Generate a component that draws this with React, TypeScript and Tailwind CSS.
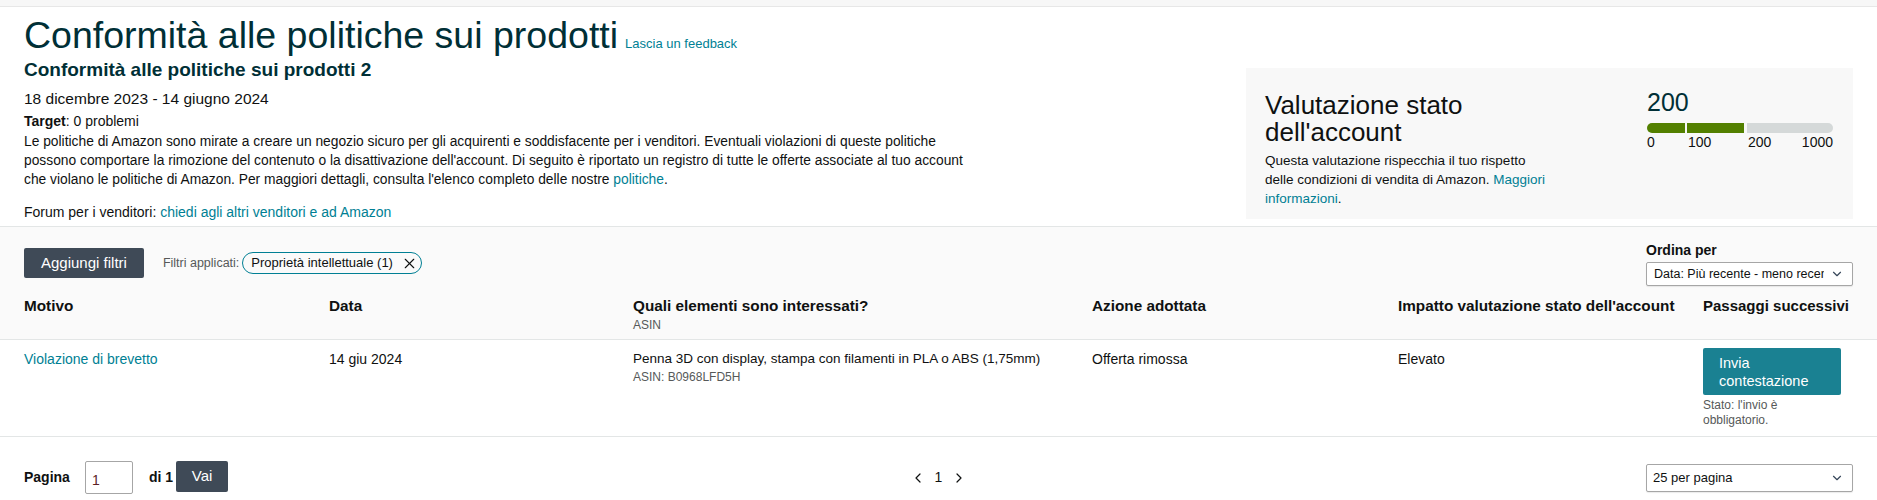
import { ChevronDown, ChevronLeft, ChevronRight, X } from 'lucide-react';

const cols = 'grid grid-cols-[305px_304px_459px_306px_305px_1fr]';

function HealthCard() {
    return (
        <div className="flex h-[151px] w-[607px] bg-[#f8f8f8] px-[19px] pt-[24px]">
            <div className="w-[382px]">
                <h2 className="text-[26px] leading-[27px] text-[#0f1111]">
                    Valutazione stato
                    <br />
                    dell'account
                </h2>
                <p className="mt-[5px] whitespace-nowrap text-[13.5px] leading-[19px] text-[#0f1111]">
                    Questa valutazione rispecchia il tuo rispetto
                    <br />
                    delle condizioni di vendita di Amazon. <a className="text-[#007f94]">Maggiori</a>
                    <br />
                    <a className="text-[#007f94]">informazioni</a>.
                </p>
            </div>
            <div className="w-[186px]">
                <div className="-mt-[4px] text-[25px] leading-[28px] text-[#002f36]">200</div>
                <div className="mt-[7px] flex h-[10px] gap-[2px]">
                    <div className="w-[38px] rounded-l-full bg-[#538000]" />
                    <div className="mr-[1px] w-[57px] bg-[#538000]" />
                    <div className="flex-1 rounded-r-full bg-[#d5d9d9]" />
                </div>
                <div className="mt-[1px] flex text-[14px] leading-[17px] text-[#0f1111]">
                    <span className="w-[41px]">0</span>
                    <span className="w-[60px]">100</span>
                    <span className="flex-1">200</span>
                    <span>1000</span>
                </div>
            </div>
        </div>
    );
}

export default function App() {
    return (
        <div className="w-[1877px] h-[500px] overflow-hidden bg-white font-['Liberation_Sans',Arial,sans-serif] text-[#0f1111]">
            {/* top strip */}
            <div className="h-[7px] border-b border-[#e7e7e7] bg-[#f7f7f7]" />

            {/* Page header */}
            <div className="flex h-[219px] justify-between px-[24px]">
                <div className="w-[960px] pt-[5px]">
                    <div className="flex items-baseline gap-[7px]">
                        <h1 className="text-[37.5px] leading-[46px] text-[#002f36]">Conformità alle politiche sui prodotti</h1>
                        <a className="text-[13px] text-[#007f94]">Lascia un feedback</a>
                    </div>
                    <h2 className="text-[19px] font-bold leading-[24px] text-[#002f36]">Conformità alle politiche sui prodotti 2</h2>
                    <div className="mt-[8px] text-[15.5px] leading-[18px]">18 dicembre 2023 - 14 giugno 2024</div>
                    <div className="mt-[4px] text-[14px] leading-[18px]">
                        <b>Target</b>: 0 problemi
                    </div>
                    <p className="mt-[2px] whitespace-nowrap text-[13.8px] leading-[19px]">
                        Le politiche di Amazon sono mirate a creare un negozio sicuro per gli acquirenti e soddisfacente per i venditori. Eventuali violazioni di queste politiche
                        <br />
                        possono comportare la rimozione del contenuto o la disattivazione dell'account. Di seguito è riportato un registro di tutte le offerte associate al tuo account
                        <br />
                        che violano le politiche di Amazon. Per maggiori dettagli, consulta l'elenco completo delle nostre <a className="text-[#007f94]">politiche</a>.
                    </p>
                    <div className="mt-[14px] text-[14px] leading-[18px]">
                        Forum per i venditori: <a className="text-[#007f94]">chiedi agli altri venditori e ad Amazon</a>
                    </div>
                </div>
                <div className="pt-[61px]">
                    <HealthCard />
                </div>
            </div>

            {/* Filters + table header */}
            <div className="h-[113px] border-t border-[#e3e6e6] bg-[#fafafa] px-[24px]">
                <div className="flex items-start justify-between pt-[14px]">
                    <div className="flex items-center pt-[7px]">
                        <button className="h-[30px] rounded-[2px] bg-[#3f4a57] px-[17px] text-[15px] text-white">Aggiungi filtri</button>
                        <span className="ml-[19px] text-[12.5px] text-[#565959]">Filtri applicati:</span>
                        <span className="ml-[3px] flex h-[22px] items-center gap-[8px] rounded-full border border-[#007f94] pl-[8px] pr-[3px] text-[13px]">
                            Proprietà intellettuale (1)
                            <X size={17} strokeWidth={1.6} className="text-[#0f1111]" />
                        </span>
                    </div>
                    <div className="w-[207px]">
                        <div className="text-[14px] font-bold leading-[18px]">Ordina per</div>
                        <div className="mt-[3px] flex h-[24px] items-center justify-between rounded-[2px] border border-[#a6a6a6] bg-white pl-[7px] pr-[8px] shadow-[0_1px_1px_rgba(0,0,0,0.08)]">
                            <span className="w-[170px] overflow-hidden whitespace-nowrap text-[12.5px] text-[#0f1111]">Data: Più recente - meno recente</span>
                            <ChevronDown size={14} strokeWidth={2} className="text-[#37475a]" />
                        </div>
                    </div>
                </div>
                <div className={`${cols} pt-[9px]`}>
                    <div className="text-[15.3px] font-bold leading-[22px]">Motivo</div>
                    <div className="text-[15.3px] font-bold leading-[22px]">Data</div>
                    <div>
                        <div className="text-[15.3px] font-bold leading-[22px]">Quali elementi sono interessati?</div>
                        <div className="text-[12px] leading-[16px] text-[#565959]">ASIN</div>
                    </div>
                    <div className="text-[15.3px] font-bold leading-[22px]">Azione adottata</div>
                    <div className="text-[15.3px] font-bold leading-[22px]">Impatto valutazione stato dell'account</div>
                    <div className="whitespace-nowrap text-[15px] font-bold leading-[22px]">Passaggi successivi</div>
                </div>
            </div>

            {/* Data row */}
            <div className={`${cols} h-[98px] border-y border-[#e3e6e6] px-[24px] pt-[8px] text-[13.5px]`}>
                <div className="pt-[1px] text-[14px] text-[#007f94]">Violazione di brevetto</div>
                <div className="pt-[1px] text-[14px]">14 giu 2024</div>
                <div className="pt-[1px]">
                    <div className="leading-[19px]">Penna 3D con display, stampa con filamenti in PLA o ABS (1,75mm)</div>
                    <div className="text-[12px] leading-[18px] text-[#565959]">ASIN: B0968LFD5H</div>
                </div>
                <div className="pt-[1px] text-[14px]">Offerta rimossa</div>
                <div className="pt-[1px] text-[14px]">Elevato</div>
                <div>
                    <button className="flex h-[47px] w-[138px] flex-col items-start justify-center rounded-[2px] bg-[#1a8192] px-[16px] text-left text-[14.5px] leading-[18px] text-white">
                        <span>Invia</span>
                        <span>contestazione</span>
                    </button>
                    <div className="mt-[3px] w-[100px] text-[12px] leading-[15px] text-[#565959]">Stato: l'invio è obbligatorio.</div>
                </div>
            </div>

            {/* Pagination */}
            <div className="flex items-center justify-between px-[24px] pt-[24px]">
                <div className="flex w-[500px] items-center">
                    <span className="text-[14px] font-bold">Pagina</span>
                    <input
                        defaultValue="1"
                        className="ml-[15px] h-[33px] w-[48px] rounded-[2px] border border-[#a6a6a6] px-[6px] pt-[4px] text-[14px] text-[#5c1f24] outline-none"
                    />
                    <span className="ml-[16px] text-[14px] font-bold">di 1</span>
                    <button className="ml-[3px] h-[31px] w-[52px] self-start rounded-[2px] bg-[#3f4a57] text-[15px] text-white">Vai</button>
                </div>
                <div className="flex items-center gap-[9px] text-[14px] text-[#0f1111]">
                    <ChevronLeft size={16} strokeWidth={1.8} />
                    <span>1</span>
                    <ChevronRight size={16} strokeWidth={1.8} />
                </div>
                <div className="flex w-[500px] justify-end">
                    <div className="flex h-[28px] w-[207px] items-center justify-between rounded-[2px] border border-[#a6a6a6] bg-white pl-[6px] pr-[8px] shadow-[0_1px_1px_rgba(0,0,0,0.08)]">
                        <span className="text-[13px]">25 per pagina</span>
                        <ChevronDown size={14} strokeWidth={2} className="text-[#37475a]" />
                    </div>
                </div>
            </div>
        </div>
    );
}
